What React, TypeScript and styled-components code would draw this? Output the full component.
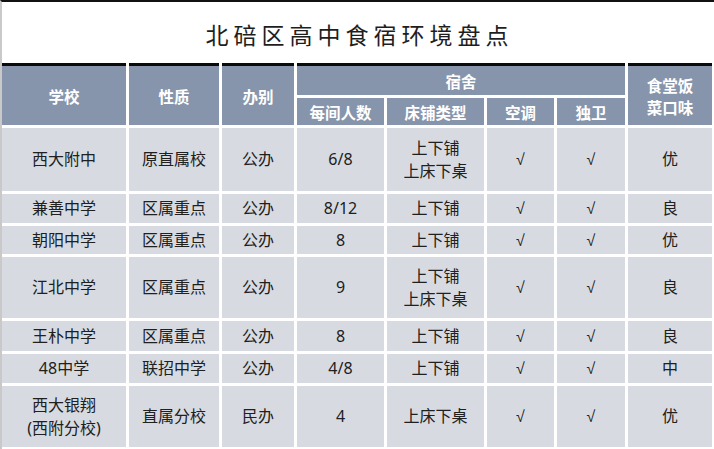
import styled, { createGlobalStyle } from 'styled-components';

const GlobalStyle = createGlobalStyle`
  html, body {
    margin: 0;
    padding: 0;
    background: #fff;
  }
  body {
    font-family: "Noto Sans CJK SC", "Noto Sans", sans-serif;
  }
`;

const Frame = styled.div`
  width: 714px;
  height: 449px;
  box-sizing: border-box;
  border-top: 2px solid #111;
  border-left: 2px solid #c9c9c9;
  background: #fff;
  overflow: hidden;
`;

const Title = styled.h1`
  margin: 0;
  height: 61px;
  display: flex;
  align-items: center;
  justify-content: center;
  padding-left: 3px;
  padding-top: 2px;
  box-sizing: border-box;
  font-family: "Noto Sans CJK SC", serif;
  font-weight: 400;
  font-size: 23px;
  letter-spacing: 5px;
  color: #1e1e1e;
`;

const Grid = styled.div`
  display: grid;
  grid-template-columns: 124px 90px 72px 87px 97px 67px 68px 84px;
  grid-template-rows: 32px 27px 63px 29px 28px 61px 30px 29px 61px;
  gap: 3px;
`;

const HeadCell = styled.div<{ $top?: boolean; $col?: string; $row?: string }>`
  grid-column: ${(p) => p.$col || 'auto'};
  grid-row: ${(p) => p.$row || 'auto'};
  background: #8695ab;
  border-top: ${(p) => (p.$top ? '3px solid #0a0a0a' : 'none')};
  display: flex;
  align-items: center;
  justify-content: center;
  text-align: center;
  color: #fff;
  font-weight: 700;
  font-size: 15.5px;
  line-height: 22px;
`;

const Cell = styled.div`
  background: #d7dbe1;
  display: flex;
  align-items: center;
  justify-content: center;
  text-align: center;
  color: #202020;
  font-family: "Noto Sans", "Noto Sans CJK SC", sans-serif;
  font-size: 16px;
  line-height: 23px;
  white-space: pre-line;
`;

const Check = styled.span`
  font-family: "Liberation Sans", "DejaVu Sans", sans-serif;
  font-size: 16px;
  color: #222;
`;

const rows = [
  ['西大附中', '原直属校', '公办', '6/8', '上下铺\n上床下桌', '√', '√', '优'],
  ['兼善中学', '区属重点', '公办', '8/12', '上下铺', '√', '√', '良'],
  ['朝阳中学', '区属重点', '公办', '8', '上下铺', '√', '√', '优'],
  ['江北中学', '区属重点', '公办', '9', '上下铺\n上床下桌', '√', '√', '良'],
  ['王朴中学', '区属重点', '公办', '8', '上下铺', '√', '√', '良'],
  ['48中学', '联招中学', '公办', '4/8', '上下铺', '√', '√', '中'],
  ['西大银翔\n(西附分校)', '直属分校', '民办', '4', '上床下桌', '√', '√', '优'],
];

export default function App() {
  return (
    <>
      <GlobalStyle />
      <Frame>
        <Title>北碚区高中食宿环境盘点</Title>
        <Grid>
          <HeadCell $top $col="1" $row="1 / span 2">学校</HeadCell>
          <HeadCell $top $col="2" $row="1 / span 2">性质</HeadCell>
          <HeadCell $top $col="3" $row="1 / span 2">办别</HeadCell>
          <HeadCell $top $col="4 / span 4" $row="1">宿舍</HeadCell>
          <HeadCell $top $col="8" $row="1 / span 2">
            食堂饭
            <br />
            菜口味
          </HeadCell>
          <HeadCell $col="4" $row="2">每间人数</HeadCell>
          <HeadCell $col="5" $row="2">床铺类型</HeadCell>
          <HeadCell $col="6" $row="2">空调</HeadCell>
          <HeadCell $col="7" $row="2">独卫</HeadCell>
          {rows.map((r, i) =>
            r.map((v, j) => (
              <Cell key={`${i}-${j}`}>{v === '√' ? <Check>{v}</Check> : v}</Cell>
            ))
          )}
        </Grid>
      </Frame>
    </>
  );
}
